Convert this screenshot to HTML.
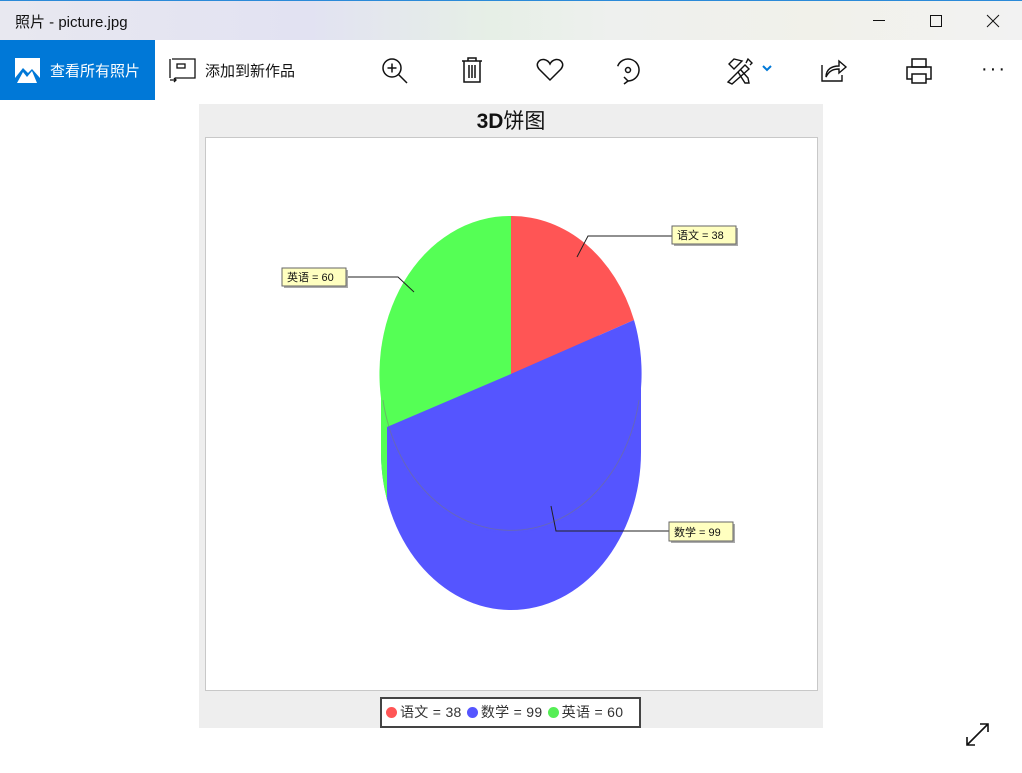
<!DOCTYPE html>
<html><head><meta charset="utf-8"><style>
*{margin:0;padding:0;box-sizing:border-box}
body{width:1022px;height:773px;background:#fff;font-family:"Liberation Sans","Noto Sans CJK SC",sans-serif;position:relative;overflow:hidden}
.title{position:absolute;left:0;top:0;width:1022px;height:40px;border-top:1px solid #2b8ad8;background:linear-gradient(90deg,#e8e8f0 0%,#e2e2f2 30%,#e6efe6 48%,#eef0ee 60%,#f1f1ea 80%,#f2f2f2 100%)}
.title span{position:absolute;left:15px;top:10px;font-size:15px;color:#111}
.tb{position:absolute;top:40px;height:60px}
.abs{position:absolute}
.dot{display:inline-block;width:11px;height:11px;border-radius:50%;vertical-align:-1px;margin:0 3px 0 1px}
</style></head><body>
<div class="title"><span>照片 - picture.jpg</span>
<svg class="abs" style="left:860px;top:0" width="162" height="40" fill="none" stroke="#111" stroke-width="1">
<line x1="13" y1="19.5" x2="25" y2="19.5"/><rect x="70.5" y="14.5" width="11" height="11"/><line x1="127" y1="14" x2="139" y2="26"/><line x1="139" y1="14" x2="127" y2="26"/></svg>
</div>
<div class="tb" style="left:0;width:155px;background:#0078d7">
<svg class="abs" style="left:15px;top:18px" width="25" height="25"><rect width="25" height="25" fill="#fff"/><path d="M0 20 L8 10 L13 15 L17 11 L25 20 L25 25 L0 25Z" fill="#0078d7"/><path d="M2 25 L8 14 L12 19 L17 13 L22 25Z" fill="#fff"/></svg>
<span class="abs" style="left:50px;top:20px;color:#fff;font-size:15px">查看所有照片</span></div>
<svg class="abs" style="left:168px;top:57px" width="28" height="26" fill="none" stroke="#111" stroke-width="1.3"><path d="M4 2 H27 V21 H7"/><path d="M2 2 V21"/><rect x="9" y="7" width="8" height="4"/><path d="M2 23 H8 M6 21 L8 23 L6 25"/></svg>
<span class="abs" style="left:205px;top:60px;font-size:15px;color:#111">添加到新作品</span>
<svg class="abs" style="left:380px;top:56px" width="30" height="30" fill="none" stroke="#111" stroke-width="1.5"><circle cx="12" cy="12" r="9"/><path d="M7.5 12 H16.5 M12 7.5 V16.5 M18.5 18.5 L27 27"/></svg>
<svg class="abs" style="left:460px;top:56px" width="24" height="28" fill="none" stroke="#111" stroke-width="1.5"><path d="M2 5 H22 M8 5 V2 H16 V5 M4 5 V26 H20 V5 M9 9 V22 M12 9 V22 M15 9 V22"/></svg>
<svg class="abs" style="left:536px;top:58px" width="28" height="24" fill="none" stroke="#111" stroke-width="1.5"><path d="M14 22 L3 11 C-1 6 3 1 8 1.5 C11 2 13 4 14 6 C15 4 17 2 20 1.5 C25 1 29 6 25 11 Z"/></svg>
<svg class="abs" style="left:614px;top:57px" width="30" height="30" fill="none" stroke="#111" stroke-width="1.5"><path d="M3.7 9.2 A11 11 0 1 1 14 24"/><circle cx="14" cy="13" r="2.5"/><path d="M10 20 L14 24 L10 27"/></svg>
<svg class="abs" style="left:726px;top:57px" width="52" height="28" fill="none" stroke="#111" stroke-width="1.4"><path d="M2 25 L19 8 L23 12 L6 27 Z M16 4 L8 12 L3 7 L8 2 Z M12 15 L19 26 L23 26 L22 21 L14 12 M20 6 L22 2 L26 6 L24 8"/><path d="M37 9 L41 13 L45 9" stroke="#0078d7" stroke-width="2"/></svg>
<svg class="abs" style="left:820px;top:57px" width="28" height="26" fill="none" stroke="#111" stroke-width="1.4"><path d="M2 8 V24 H22 V18 M6 20 C6 12 12 9 19 9 V4 L26 10 L19 16 V12 C13 12 9 14 6 20Z"/></svg>
<svg class="abs" style="left:905px;top:57px" width="28" height="28" fill="none" stroke="#111" stroke-width="1.5"><rect x="7" y="2" width="14" height="8"/><path d="M7 22 H2 V10 H26 V22 H21"/><rect x="7" y="17" width="14" height="9"/></svg>
<span class="abs" style="left:981px;top:58px;font-size:20px;color:#111;letter-spacing:2px">···</span>

<div class="abs" style="left:199px;top:104px;width:624px;height:624px;background:#eeeeee">
<div class="abs" style="left:0;top:1px;width:624px;text-align:center;font-size:21px;color:#111"><b>3D</b>饼图</div>
<div class="abs" style="left:6px;top:33px;width:613px;height:554px;background:#fff;border:1px solid #c8c8c8"></div>
<div class="abs" style="left:181px;top:593px;width:261px;height:31px;background:#fff;border:2px solid #444;font-size:14px;color:#333;line-height:27px;padding-left:3px;white-space:nowrap;letter-spacing:0.3px">
<span class="dot" style="background:#f55"></span>语文 = 38 <span class="dot" style="background:#55f"></span>数学 = 99 <span class="dot" style="background:#5e5"></span>英语 = 60</div>
</div>
<svg class="abs" style="left:0;top:0" width="1022" height="773">
<ellipse cx="511" cy="452" rx="130" ry="158" fill="#5555ff"/>
<rect x="381" y="374" width="260" height="78" fill="#5555ff"/>
<path d="M387 427 A130 158 0 0 1 381 374 L381 452 A130 158 0 0 0 387 500Z" fill="#55ff55"/>
<path d="M511 374 L511 216 A130 158 0 0 1 634 320Z" fill="#ff5555"/>
<path d="M511 374 L634 320 A130 158 0 0 1 387 427Z" fill="#5555ff"/>
<path d="M511 374 L387 427 A130 158 0 0 1 511 216Z" fill="#55ff55"/>
<path d="M383 400 A130 158 0 0 0 639 400" fill="none" stroke="#777" stroke-width="1" opacity="0.5"/>
<g fill="none" stroke="#222" stroke-width="1"><path d="M577 257 L588 236 L672 236"/><path d="M414 292 L398 277 L346 277"/><path d="M551 506 L556 531 L670 531"/></g>
<g font-size="11" fill="#111">
<rect x="674" y="228" width="64" height="18" fill="#aaa"/><rect x="672" y="226" width="64" height="18" fill="#ffffc0" stroke="#666"/><text x="677" y="239">语文 = 38</text>
<rect x="284" y="270" width="64" height="18" fill="#aaa"/><rect x="282" y="268" width="64" height="18" fill="#ffffc0" stroke="#666"/><text x="287" y="281">英语 = 60</text>
<rect x="671" y="524" width="64" height="19" fill="#aaa"/><rect x="669" y="522" width="64" height="19" fill="#ffffc0" stroke="#666"/><text x="674" y="536">数学 = 99</text>
</g>
<path d="M967 745 L988 724 M980 724 H988 V732 M967 737 V745 H975" fill="none" stroke="#111" stroke-width="1.6"/>
</svg>
</body></html>
